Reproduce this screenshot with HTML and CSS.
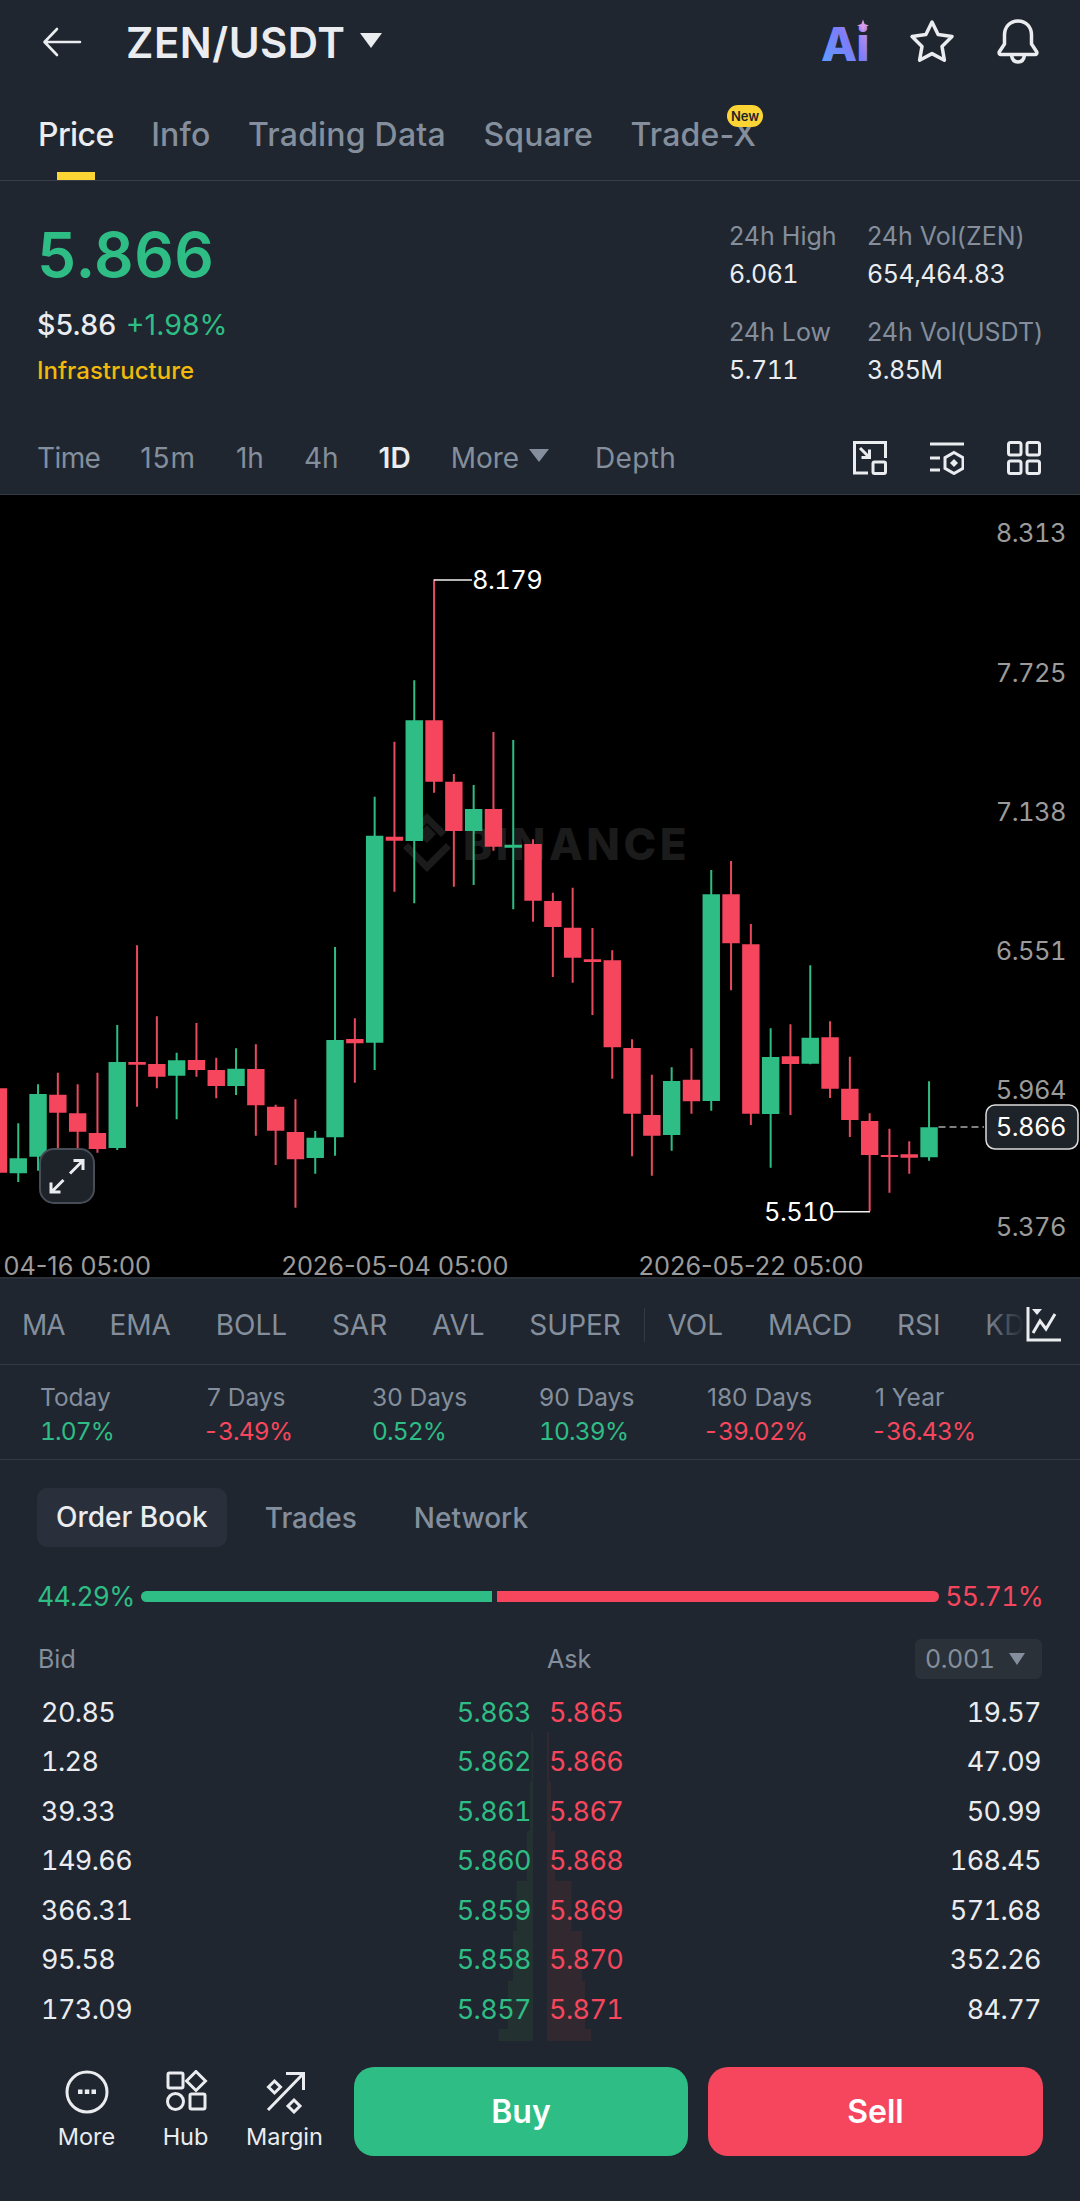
FILE: index.html
```html
<!DOCTYPE html>
<html lang="en">
<head>
<meta charset="utf-8">
<title>ZEN/USDT</title>
<link rel="stylesheet" href="styles.css">
</head>
<body>
<div class="app">
  <header class="top">
    <svg class="back" width="40" height="32" viewBox="0 0 40 32"><path d="M38 16H3M15 3 2.5 16 15 29"/></svg>
    <h1 class="pair">ZEN/USDT</h1>
    <span class="caret caret-title"></span>
    <div class="top-icons">
      <svg class="ai-logo" width="48" height="48" viewBox="0 0 48 48">
        <defs>
          <linearGradient id="aig" x1="0" y1="1" x2="1" y2="0"><stop offset="0" stop-color="#58a6ff"/><stop offset=".55" stop-color="#7d7cf8"/><stop offset="1" stop-color="#d79be8"/></linearGradient>
        </defs>
        <text class="ai" x="-1" y="43" fill="url(#aig)">Ai</text>
        <path class="spark" d="M41 1.5l1.6 4.4 4.4 1.6-4.4 1.6-1.6 4.4-1.6-4.4-4.4-1.6 4.4-1.6z"/>
      </svg>
      <svg class="ico" width="48" height="48" viewBox="0 0 48 48"><path d="M24 4l6.1 12.6 13.9 2-10 9.8 2.4 13.8-12.4-6.6-12.4 6.6 2.4-13.8-10-9.8 13.9-2z"/></svg>
      <svg class="ico" width="48" height="48" viewBox="0 0 48 48"><path d="M24 3C15.5 3 10.5 9.5 10.5 17v9l-5 7.5c-1 1.500 0 3 1.500 3h34c1.500 0 2.500-1.500 1.500-3l-5-7.500v-9C37.500 9.500 32.500 3 24 3zM17.500 37c.5 4.500 3 7 6.500 7s6-2.500 6.500-7"/></svg>
    </div>
  </header>

  <nav class="tabs">
    <a class="tab active">Price</a>
    <a class="tab">Info</a>
    <a class="tab">Trading Data</a>
    <a class="tab">Square</a>
    <a class="tab tab-new">Trade-X<span class="badge">New</span></a>
  </nav>

  <section class="ticker">
    <div class="ticker-main">
      <div class="last">5.866</div>
      <div class="fiat">$5.86 <span class="up">+1.98%</span></div>
      <div class="sector">Infrastructure</div>
    </div>
    <dl class="stats">
      <div class="stat"><dt>24h High</dt><dd>6.061</dd></div>
      <div class="stat"><dt>24h Vol(ZEN)</dt><dd>654,464.83</dd></div>
      <div class="stat"><dt>24h Low</dt><dd>5.711</dd></div>
      <div class="stat"><dt>24h Vol(USDT)</dt><dd>3.85M</dd></div>
    </dl>
  </section>

  <div class="frames">
    <span class="f-time">Time</span><span class="f-15m">15m</span><span>1h</span><span>4h</span><span class="on">1D</span>
    <span class="more">More<i class="caret caret-more"></i></span>
    <span class="depth">Depth</span>
    <div class="frame-icons">
      <svg class="ico thin" width="34" height="34" viewBox="0 0 34 34"><path d="M15 32H1.500V1.500h31V17M7 7l9.500 9.500M16.500 8.500v8h-8"/><rect x="20" y="21" width="12.500" height="11.500" rx="1.500"/></svg>
      <svg class="ico thin" width="34" height="34" viewBox="0 0 34 34"><path d="M0 3h34M0 17h10M0 29h10M24 11.500l9 5.200v10.600l-9 5.200-9-5.200V16.700z"/><path class="solid" d="M24 18l4 4-4 4-4-4z"/></svg>
      <svg class="ico thin" width="34" height="34" viewBox="0 0 34 34"><rect x="1.500" y="1.500" width="12.500" height="12.500" rx="2"/><rect x="20" y="1.500" width="12.500" height="12.500" rx="2"/><rect x="1.500" y="20" width="12.500" height="12.500" rx="2"/><rect x="20" y="20" width="12.500" height="12.500" rx="2"/></svg>
    </div>
  </div>

  <div class="chart">
    <svg class="plot" width="1080" height="782" viewBox="0 495 1080 782">
      <g class="mark">
        <path d="M427 817l9 9-9 9-9-9zM427 805l-19 19 5 5 14-14 14 14 5-5zM408 835l5 5-5 5-5-5zM446 835l5 5-5 5-5-5z" transform="translate(0 8)"/>
        <path d="M427 872l-19-19 5-5 14 14 14-14 5 5z"/>
        <text class="mark-text" x="463" y="860">BINANCE</text>
      </g>
      <path class="wick green" d="M18.250 1123.300V1182M38.050 1084.300V1170.700M117.250 1025V1150M236.050 1048.300V1095M176.650 1052.700V1119.300M315.250 1131V1173.700M335.050 947V1155.700M374.650 796.700V1070M414.250 680.300V903.300M473.650 785V885M513.250 740V909.300M671.650 1067.300V1150.700M711.250 870V1110.700M770.650 1028.300V1167.700M810.250 965.300V1064.300M929.050 1081.300V1160.700"/>
      <path class="wick red" d="M-1.550 1085V1186.700M57.850 1072.700V1161.700M77.650 1084.300V1158.300M97.450 1072.700V1152.700M137.050 945.300V1106.700M156.850 1016.300V1088.300M196.450 1023V1076.700M216.250 1057.700V1098.300M255.850 1044.300V1135.700M275.650 1104.700V1165M295.450 1099.300V1207.700M354.850 1018.300V1082.700M394.450 741.700V891.700M434.050 579.300V792.700M453.850 774V886.700M493.450 732V850.700M533.050 839.300V921.700M552.850 892.700V977M572.650 887.700V982.700M592.450 928V1015M612.250 950.300V1078.700M632.050 1039.300V1156.300M651.850 1074.700V1175.700M691.450 1048.300V1113.700M731.050 861V990.300M750.850 924V1125M790.450 1024.300V1115M830.050 1021.300V1098M849.850 1056.700V1137M869.650 1113.300V1211.300M889.450 1128.700V1192.700M909.250 1141.300V1173.700"/>
      <path class="body green" d="M18.250 1158.300V1173.300M38.050 1094V1156.700M117.250 1062V1148M176.650 1060.300V1075.700M236.050 1068.700V1086M315.250 1137.700V1158M335.050 1040V1137.300M374.650 835.700V1042.700M414.250 720.300V841M473.650 809V831M513.250 844.700V847.700M671.650 1081V1135M711.250 894.300V1101M770.650 1057V1114M810.250 1037.700V1063.700M929.050 1127.300V1157.300"/>
      <path class="body red" d="M-1.550 1088.300V1172.700M57.850 1094.700V1112.700M77.650 1113.300V1131.700M97.450 1133V1149M137.050 1062V1064.700M156.850 1064V1076.700M196.450 1060V1070M216.250 1070V1086M255.850 1069V1105.300M275.650 1106.700V1130.700M295.450 1132V1159.300M354.850 1039V1043.300M394.450 836.700V840.700M434.050 720.300V781.700M453.850 781.700V831M493.450 809V846.700M533.050 844V900.700M552.850 901V927M572.650 927.700V957.700M592.450 959.300V962M612.250 960.300V1047.300M632.050 1048V1113.700M651.850 1115V1135.700M691.450 1079.700V1101.300M731.050 894.300V943.300M750.850 944.300V1113.700M790.450 1056.300V1064M830.050 1037.300V1088.700M849.850 1088.700V1120M869.650 1121V1155M889.450 1155V1157M909.250 1154.300V1157.700"/>
      <path class="leader" d="M434 580H472M832 1211.700H870"/>
      <path class="dash" d="M938.500 1127H984"/>
      <text class="peak" x="472" y="589">8.179</text>
      <text class="peak" x="764" y="1220.500">5.510</text>
      <text class="axis" x="1066" y="542">8.313</text>
      <text class="axis" x="1066" y="681.500">7.725</text>
      <text class="axis" x="1066" y="821">7.138</text>
      <text class="axis" x="1066" y="959.500">6.551</text>
      <text class="axis" x="1066" y="1099">5.964</text>
      <text class="axis" x="1066" y="1235.500">5.376</text>
      <text class="date end" x="151" y="1274.500">04-16 05:00</text>
      <text class="date mid" x="395" y="1274.500">2026-05-04 05:00</text>
      <text class="date mid" x="751" y="1274.500">2026-05-22 05:00</text>
      <rect class="last-box" x="986" y="1105" width="92" height="44" rx="9"/>
      <text class="last-text" x="1066" y="1136">5.866</text>
      <rect class="expand-box" x="40" y="1149" width="54" height="54" rx="14"/>
      <path class="expand" d="M70 1173.500l12.500-12.500M73.500 1160.500h9.500v9.500M63.500 1180 51.500 1192M51 1182.500v9.500h9.500"/>
    </svg>
  </div>

  <div class="inds">
    <span class="i-ma">MA</span><span>EMA</span><span>BOLL</span><span>SAR</span><span>AVL</span><span>SUPER</span>
    <i class="sep"></i>
    <span>VOL</span><span>MACD</span><span>RSI</span><span>KDJ</span>
    <div class="ind-btn">
      <svg class="ico thin" width="36" height="36" viewBox="0 0 36 36"><path d="M2 1v33h33M7 27l7-12 6 8 9-15"/><path class="solid" d="M6 3h10l-5 6z"/></svg>
    </div>
  </div>

  <div class="perf">
    <div class="cell"><span>Today</span><b class="up">1.07%</b></div>
    <div class="cell"><span>7 Days</span><b class="down">-3.49%</b></div>
    <div class="cell"><span>30 Days</span><b class="up">0.52%</b></div>
    <div class="cell"><span>90 Days</span><b class="up">10.39%</b></div>
    <div class="cell"><span>180 Days</span><b class="down">-39.02%</b></div>
    <div class="cell"><span>1 Year</span><b class="down">-36.43%</b></div>
  </div>

  <div class="book-tabs">
    <span class="pill">Order Book</span><span>Trades</span><span class="b-net">Network</span>
  </div>

  <div class="ratio">
    <span class="up">44.29%</span>
    <div class="bar"><i class="bar-buy"></i><i class="bar-sell"></i></div>
    <span class="down">55.71%</span>
  </div>

  <div class="book-head">
    <span class="h-bid">Bid</span><span class="h-ask">Ask</span>
    <span class="step">0.001<i class="caret caret-step"></i></span>
  </div>

  <div class="rows">
    <svg class="depth-bars" width="1080" height="356" viewBox="0 1689 1080 356">
      <path class="d-buy" d="M533 1733V2042H498.600V2030H508V1982H513V1932H516.500V1882H527V1832H530V1783H531.500V1733z"/>
      <path class="d-sell" d="M547 1733V2042H591V2030H585V1982H582V1932H571.600V1882H555V1832H551V1783H549V1733z"/>
    </svg>
    <div class="row"><div class="bid"><span>20.85</span><b class="up">5.863</b></div><div class="ask"><b class="down">5.865</b><span>19.57</span></div></div>
    <div class="row"><div class="bid"><span>1.28</span><b class="up">5.862</b></div><div class="ask"><b class="down">5.866</b><span>47.09</span></div></div>
    <div class="row"><div class="bid"><span>39.33</span><b class="up">5.861</b></div><div class="ask"><b class="down">5.867</b><span>50.99</span></div></div>
    <div class="row"><div class="bid"><span>149.66</span><b class="up">5.860</b></div><div class="ask"><b class="down">5.868</b><span>168.45</span></div></div>
    <div class="row"><div class="bid"><span>366.31</span><b class="up">5.859</b></div><div class="ask"><b class="down">5.869</b><span>571.68</span></div></div>
    <div class="row"><div class="bid"><span>95.58</span><b class="up">5.858</b></div><div class="ask"><b class="down">5.870</b><span>352.26</span></div></div>
    <div class="row"><div class="bid"><span>173.09</span><b class="up">5.857</b></div><div class="ask"><b class="down">5.871</b><span>84.77</span></div></div>
  </div>

  <footer class="foot">
    <div class="nav-item">
      <svg class="ico thin" width="44" height="44" viewBox="0 0 44 44"><circle cx="22" cy="22" r="20"/><path class="solid" d="M13 19.500h4.500v4.500H13zM19.800 19.500h4.500v4.500h-4.500zM26.500 19.500H31v4.500h-4.500z"/></svg>
      <span>More</span>
    </div>
    <div class="nav-item">
      <svg class="ico thin" width="44" height="44" viewBox="0 0 44 44"><rect x="4" y="3" width="15" height="15" rx="1.500"/><path d="M32 1.500l9.500 9.500-9.500 9.500-9.500-9.500z"/><circle cx="11.500" cy="31.500" r="8"/><rect x="26" y="24" width="15" height="15" rx="1.500"/></svg>
      <span>Hub</span>
    </div>
    <div class="nav-item">
      <svg class="ico thin" width="44" height="44" viewBox="0 0 44 44"><path d="M5 41 39 6M23 4.500h17.500V21M11.500 12l6 6-6 6-6-6zM31 31l6 6-6 6-6-6z" transform="translate(0 -1)"/></svg>
      <span>Margin</span>
    </div>
    <button class="cta buy">Buy</button>
    <button class="cta sell">Sell</button>
  </footer>
</div>
</body>
</html>
```
FILE: styles.css
```css
* { box-sizing: border-box; margin: 0; padding: 0; }
html, body { width: 1080px; height: 2201px; overflow: hidden; background: #1f262f; }
body { font-family: Inter, "Noto Sans", sans-serif; color: #eaecef; }
.app { width: 1080px; height: 2201px; position: relative; overflow: hidden; }

.up { color: #2ebd85; }
.down { color: #f6465d; }
b { font-weight: 400; }

.ico path, .ico rect, .ico circle { fill: none; stroke: #eaecef; stroke-width: 3.5; stroke-linejoin: round; stroke-linecap: round; }
.ico.thin path, .ico.thin rect, .ico.thin circle { stroke-width: 3; stroke-linecap: butt; stroke-linejoin: miter; }
.ico.thin rect { stroke-linejoin: round; }
.ico path.solid { fill: #eaecef; stroke: none; }

.caret { display: inline-block; width: 0; height: 0; border-style: solid; border-color: #848e9c transparent transparent transparent; }

.top { height: 84px; display: flex; align-items: center; padding: 0 38px 0 42px; }
.back { fill: none; stroke: #eaecef; stroke-width: 2.6; stroke-linecap: round; stroke-linejoin: round; }
.pair { font-size: 42px; font-weight: 600; margin-left: 44px; letter-spacing: .5px; color: #eaecef; }
.caret-title { border-width: 15px 11px 0 11px; border-top-color: #eaecef; margin: 0 0 3px 14px; }
.top-icons { margin-left: auto; display: flex; gap: 38px; }
.ai-logo { overflow: visible; }
.ai { font-size: 47px; font-weight: 800; letter-spacing: -1px; }
.spark { fill: #d79be8; }

.tabs { height: 97px; display: flex; gap: 37.500px; padding: 32px 0 0 38px; border-bottom: 1px solid #373e49; font-size: 32px; color: #848e9c; font-weight: 500; }
.tab { position: relative; line-height: 38px; height: 38px; letter-spacing: .2px; }
.tab.active { color: #eaecef; letter-spacing: -.6px; }
.tab.active::after { content: ""; position: absolute; left: 19px; width: 38px; top: 56px; height: 8px; background: #fcd535; }
.badge { position: absolute; right: -7px; top: -11px; width: 36px; height: 22px; border-radius: 11px; background: #fcd535; color: #1e2329; font-size: 13px; line-height: 22px; text-align: center; font-weight: 600; letter-spacing: 0; }

.ticker { height: 241px; display: flex; justify-content: space-between; padding: 40px 0 0 37px; }
.last { font-size: 62px; line-height: 68px; font-weight: 600; color: #2ebd85; font-variant-numeric: tabular-nums; }
.fiat { margin-top: 18px; font-size: 28.500px; line-height: 36px; font-weight: 500; }
.fiat .up { font-weight: 400; margin-left: 2px; }
.sector { margin-top: 11px; font-size: 24px; line-height: 34px; color: #f0b90b; font-weight: 500; }
.stats { width: 351px; margin-top: -2px; display: grid; grid-template-columns: 138px 213px; row-gap: 24px; align-content: start; }
.stat { display: flex; flex-direction: column; gap: 4px; }
.stat dt { font-size: 25px; line-height: 34px; color: #848e9c; white-space: nowrap; }
.stat dd { font-size: 25px; line-height: 34px; color: #eaecef; font-variant-numeric: tabular-nums; letter-spacing: -.5px; }

.frames { height: 73px; display: flex; align-items: center; gap: 40px; padding: 0 39px 1px 37px; font-size: 28px; color: #848e9c; border-bottom: 1px solid #333a44; }
.frames .on { color: #eaecef; font-weight: 600; }
.f-time { letter-spacing: -.6px; }
.f-15m { letter-spacing: .9px; }
.more { display: flex; align-items: center; gap: 10px; }
.caret-more { border-width: 13px 10px 0 10px; margin-bottom: 4px; }
.depth { margin-left: 6px; letter-spacing: .3px; }
.frame-icons { margin-left: auto; display: flex; gap: 43px; }

.chart { height: 782px; background: #000; }
.plot { display: block; overflow: visible; }
.wick, .body, .leader, .dash { fill: none; }
.wick { stroke-width: 2; }
.body { stroke-width: 17.4; }
.green { stroke: #2ebd85; }
.red { stroke: #f6465d; }
.wick.red { stroke: #e8495f; }
.leader { stroke: #f0f0f0; stroke-width: 1.500; }
.dash { stroke: #aaa; stroke-width: 1.500; stroke-dasharray: 7 4; }
.peak, .last-text, .axis { font-size: 25.500px; font-variant-numeric: tabular-nums; letter-spacing: -.55px; }
.peak, .last-text { fill: #fff; }
.axis { fill: #9b9b9b; text-anchor: end; }
.last-text { text-anchor: end; }
.date { font-size: 25.300px; fill: #9b9b9b; }
.date.end { text-anchor: end; }
.date.mid { text-anchor: middle; }
.last-box { fill: #1e2329; stroke: #dcdcdc; stroke-width: 1.500; }
.expand-box { fill: #1e2329; stroke: #474d57; stroke-width: 2; }
.expand { fill: none; stroke: #eaecef; stroke-width: 3; }
.mark path { fill: #1b1b1b; }
.mark-text { font-size: 44px; font-weight: 800; fill: #1b1b1b; letter-spacing: 3.500px; }

.inds { position: relative; height: 88px; display: flex; align-items: center; gap: 44.800px; padding: 6px 0 0 22px; font-size: 28px; color: #848e9c; border-top: 2px solid #2b3139; border-bottom: 1px solid #333a44; overflow: hidden; white-space: nowrap; }
.i-ma { letter-spacing: -1px; }
.sep { width: 1px; height: 34px; background: #333a44; margin: 0 -22px; }
.ind-btn { position: absolute; right: 0; top: 0; bottom: 0; width: 96px; padding: 27px 0 0 42px; background: linear-gradient(90deg, rgba(31,38,47,0), #1f262f 42%); }

.perf { height: 95px; display: grid; grid-template-columns: 167px 165px 167px 168px 168px 1fr; padding: 16px 0 0 40px; border-bottom: 1px solid #333a44; }
.cell { display: flex; flex-direction: column; gap: 2px; font-size: 24.500px; line-height: 32px; }
.cell span { color: #848e9c; }
.cell b { font-variant-numeric: tabular-nums; letter-spacing: -.85px; }
.cell b.down { margin-left: -4px; }

.book-tabs { margin-top: 28px; height: 59px; display: flex; align-items: center; gap: 38px; padding-left: 37px; font-size: 28px; color: #848e9c; font-weight: 500; }
.pill { height: 59px; line-height: 59px; padding: 0 19px; border-radius: 10px; background: #2a303b; color: #eaecef; }
.b-net { margin-left: 19px; }

.ratio { margin-top: 34px; height: 30px; display: flex; align-items: center; padding: 0 37px; font-size: 26.500px; justify-content: space-between; font-variant-numeric: tabular-nums; letter-spacing: -.7px; }
.bar { width: 798px; height: 11px; display: flex; gap: 5px; }
.bar-buy { width: 351px; background: #2ebd85; border-radius: 6px 0 0 6px; }
.bar-sell { flex: 1; background: #f6465d; border-radius: 0 6px 6px 0; }

.book-head { margin-top: 28px; height: 40px; display: flex; align-items: center; padding: 0 38px; font-size: 25px; color: #848e9c; }
.h-bid { width: 509px; }
.step { margin-left: auto; width: 127px; height: 40px; padding-left: 10px; border-radius: 6px; background: #2b3139; display: flex; align-items: center; gap: 14px; font-variant-numeric: tabular-nums; letter-spacing: -.4px; }
.caret-step { border-width: 12px 8.500px 0 8.500px; }

.rows { position: relative; margin-top: 9px; }
.depth-bars { position: absolute; left: 0; top: 0; }
.d-buy { fill: #233130; }
.d-sell { fill: #31292f; }
.row { position: relative; height: 49.500px; display: flex; align-items: center; gap: 18px; padding: 0 39px 0 41px; font-size: 27px; line-height: 34px; font-variant-numeric: tabular-nums; letter-spacing: -.6px; }
.bid { width: 490px; display: flex; justify-content: space-between; }
.ask { flex: 1; display: flex; justify-content: space-between; }

.foot { margin-top: 32px; display: flex; align-items: flex-start; padding: 0 37px; }
.nav-item { width: 99px; display: flex; flex-direction: column; align-items: center; margin-top: 3px; gap: 8px; font-size: 23.500px; line-height: 30px; color: #eaecef; }
.nav-item:last-of-type { margin-right: 20px; }
.cta { height: 89px; border: 0; border-radius: 20px; color: #fff; font: 600 32px Inter, sans-serif; }
.buy { width: 334px; background: #2ebd85; margin-right: 20px; }
.sell { width: 335px; background: #f6465d; }
```
